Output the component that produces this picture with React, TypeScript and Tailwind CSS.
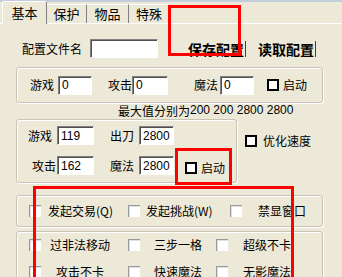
import React from "react";

const font = { fontFamily: '"Noto Sans CJK SC", "Liberation Sans", sans-serif' };

function Tab({ label, selected, w }: { label: string; selected?: boolean; w: string }) {
  return selected ? (
    <div className={`${w} relative -mb-px flex h-[23px] items-center justify-center rounded-t-[2px] border-l border-t border-r border-l-white border-t-white border-r-[#808080] bg-[#ece9d8] text-[13px]`}>
      {label}
    </div>
  ) : (
    <div className={`${w} flex h-[19px] items-center justify-center border-t border-r border-t-white border-r-[#808080] text-[13px]`}>
      {label}
    </div>
  );
}

function Field({ value, w }: { value: string; w: string }) {
  return (
    <div
      className={`${w} flex h-[19px] items-center border border-t-[#808080] border-l-[#808080] border-r-white border-b-white bg-white pl-[3px] text-[12px] shadow-[inset_1px_1px_0_#505050]`}
      style={{ fontFamily: '"Liberation Sans", sans-serif' }}
    >
      {value}
    </div>
  );
}

function BoldCheck() {
  return <div className="h-[12px] w-[12px] shrink-0 border-2 border-black bg-white" />;
}

function FlatCheck() {
  return <div className="h-[12px] w-[12px] shrink-0 border-t border-l border-[#9a9a9a] bg-white shadow-[inset_1px_1px_0_#e0e0e0]" />;
}

function Group({ className, children }: { className: string; children?: React.ReactNode }) {
  return (
    <div className={`rounded-[3px] border border-[#c7c4b5] shadow-[inset_1px_1px_0_#fff,1px_1px_0_#fff] ${className}`}>
      {children}
    </div>
  );
}

export default function App() {
  return (
    <div className="relative h-[277px] w-[342px] overflow-hidden bg-[#ece9d8] text-[12px] text-black" style={font}>
      <div className="h-[2px] bg-[#c3cddc]" />

      <div className="flex h-[22px] items-end border-b border-white pl-[2px]">
        <Tab label="基本" selected w="w-[45px]" />
        <Tab label="保护" w="w-[40px]" />
        <Tab label="物品" w="w-[42px]" />
        <Tab label="特殊" w="w-[41px]" />
      </div>

      <div className="mt-[15px] flex h-[19px] items-center">
        <span className="ml-[22px] w-[68px]">配置文件名</span>
        <Field value="" w="w-[68px]" />
        <span className="ml-[30px] border-r border-[#404040] pr-[1px] text-[14px] font-bold leading-[16px]">保存配置</span>
        <span className="ml-[12px] border-r border-[#404040] pr-[1px] text-[14px] font-bold leading-[16px]">读取配置</span>
      </div>

      <Group className="mx-[16px] mt-[9px] flex h-[36px] w-[307px] items-center">
        <span className="ml-[13px] w-[28px]">游戏</span>
        <Field value="0" w="w-[34px]" />
        <span className="ml-[16px] w-[24px]">攻击</span>
        <Field value="0" w="w-[36px]" />
        <span className="ml-[26px] w-[26px]">魔法</span>
        <Field value="0" w="w-[34px]" />
        <div className="ml-[13px]">
          <BoldCheck />
        </div>
        <span className="ml-[4px]">启动</span>
      </Group>

      <div className="flex h-[15px] items-center pl-[118px] leading-[15px]">
        最大值分别为<span style={{ fontFamily: '"Liberation Sans", sans-serif' }}>200 200 2800 2800</span>
      </div>

      <div className="mt-[1px] flex">
        <Group className="ml-[16px] flex h-[64px] w-[221px] flex-col pt-[6px]">
          <div className="flex h-[19px] items-center">
            <span className="ml-[11px] w-[29px]">游戏</span>
            <Field value="119" w="w-[37px]" />
            <span className="ml-[16px] w-[29px]">出刀</span>
            <Field value="2800" w="w-[35px]" />
          </div>
          <div className="mt-[11px] flex h-[19px] items-center">
            <span className="ml-[15px] w-[25px]">攻击</span>
            <Field value="162" w="w-[37px]" />
            <span className="ml-[16px] w-[29px]">魔法</span>
            <Field value="2800" w="w-[35px]" />
            <div className="ml-[11px] mt-[5px] flex items-center">
              <BoldCheck />
              <span className="ml-[4px]">启动</span>
            </div>
          </div>
        </Group>
        <div className="ml-[8px] mt-[16px] flex h-[12px] items-center">
          <BoldCheck />
          <span className="ml-[6px] text-[12px]">优化速度</span>
        </div>
      </div>

      <Group className="ml-[16px] mt-[12px] flex h-[32px] w-[307px] items-center pl-[12px]">
        <div className="flex w-[99px] items-center">
          <FlatCheck />
          <span className="ml-[7px]">发起交易(Q)</span>
        </div>
        <div className="flex w-[102px] items-center">
          <FlatCheck />
          <span className="ml-[6px]">发起挑战(W)</span>
        </div>
        <div className="flex items-center">
          <FlatCheck />
          <span className="ml-[16px]">禁显窗口</span>
        </div>
      </Group>

      <Group className="ml-[16px] mt-[4px] h-[60px] w-[307px] pl-[12px] pt-[6px]">
        {[
          ["过非法移动", "三步一格", "超级不卡"],
          ["攻击不卡", "快速魔法", "无影魔法"],
        ].map((row, i) => (
          <div key={i} className={`flex h-[14px] items-center ${i ? "mt-[13px]" : ""}`}>
            <FlatCheck />
            <span className="w-[78px] text-center">{row[0]}</span>
            <span className="w-[9px]" />
            <FlatCheck />
            <span className="w-[76px] text-center">{row[1]}</span>
            <FlatCheck />
            <span className="w-[78px] text-center">{row[2]}</span>
          </div>
        ))}
      </Group>

      <div className="pointer-events-none absolute left-[168px] top-[5px] h-[51px] w-[73px] border-[3px] border-[#ff0000]" />
      <div className="pointer-events-none absolute left-[175px] top-[148px] h-[37px] w-[57px] border-[3px] border-[#ff0000]" />
      <div className="pointer-events-none absolute left-[33px] top-[186px] h-[120px] w-[261px] border-[3px] border-[#ff0000]" />
    </div>
  );
}
